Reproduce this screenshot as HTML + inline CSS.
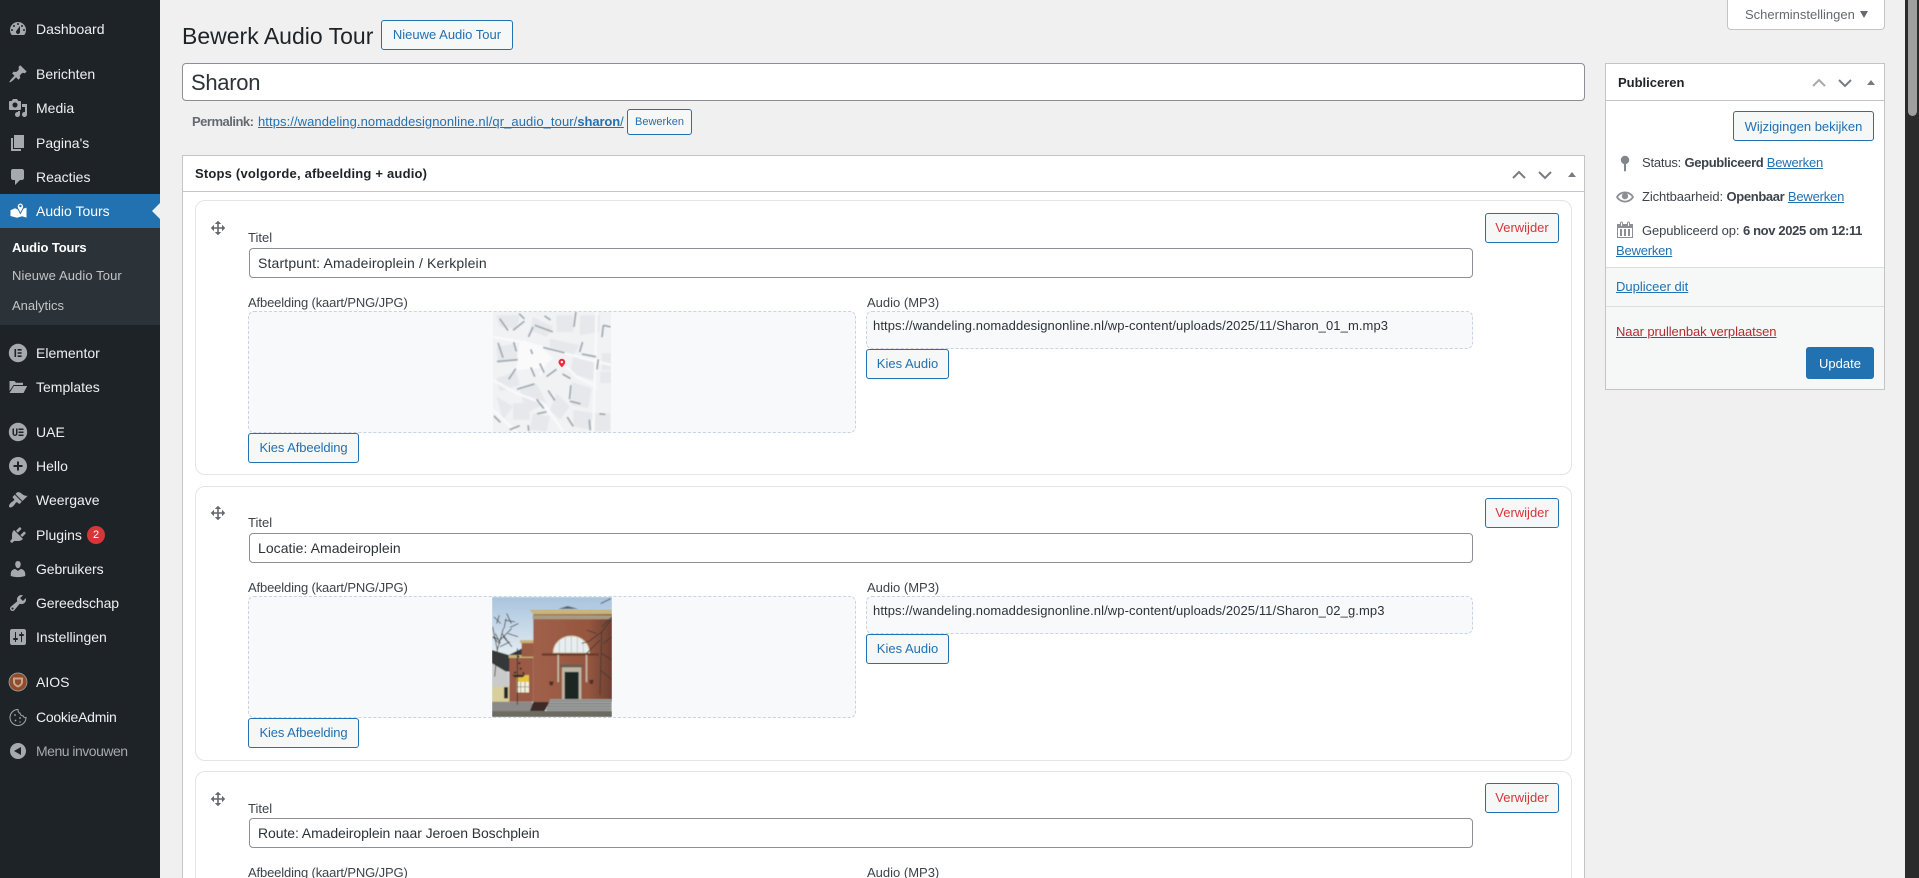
<!DOCTYPE html>
<html lang="nl"><head><meta charset="utf-8"><title>Bewerk Audio Tour</title>
<style>
html,body{margin:0;padding:0;width:1919px;height:878px;overflow:hidden;background:#f0f0f1;font-family:"Liberation Sans",Arial,sans-serif;font-size:13px;color:#3c434a}
*{box-sizing:border-box}
#wrap{position:absolute;left:0;top:0;width:1919px;height:878px;overflow:hidden;background:#f0f0f1}
.t,.b,.i,.a{position:absolute}
.t{white-space:nowrap;line-height:20px;height:20px}
.a{display:block}
#side{position:absolute;left:0;top:0;width:160px;height:878px;background:#1d2327}
#side .t{left:36px;color:#f0f0f1;font-size:14px}
#side svg{position:absolute;left:8px;width:20px;height:20px;fill:#a7aaad}
#side .s{left:12px;font-size:13px;color:#c3c4c7}
.b{border:1px solid #2271b1;background:#f6f7f7;color:#2271b1;border-radius:3px;text-align:center;white-space:nowrap;font-size:13px}
.in{position:absolute;background:#fff;border:1px solid #8c8f94;border-radius:4px;white-space:nowrap;color:#2c3338}
.ti{font-size:14px;letter-spacing:.05px;left:249px;width:1224px;height:30px;padding-left:8px;line-height:29px}
.card{position:absolute;left:195px;width:1377px;height:275px;background:#fff;border:1px solid #e2e4e7;border-radius:10px}
.dash{position:absolute;background:#f8f9fb;border:1px dashed #c9d3e3;border-radius:6px}
.lab{letter-spacing:-.14px}
.url{letter-spacing:.09px;color:#2c3338}
.pub b{letter-spacing:-.35px}
.pub{letter-spacing:-.1px}
.pub a{letter-spacing:-.2px}
.ka{letter-spacing:-.1px}
a{color:#2271b1;text-decoration:underline}
</style></head><body>
<div id="wrap">

<div id="side">
<div class="t" style="top:19px">Dashboard</div>
<svg style="top:19px" viewBox="0 0 20 20"><path fill-rule="evenodd" d="M3.76 16h12.48c1.1-1.37 1.76-3.11 1.76-5 0-4.42-3.58-8-8-8s-8 3.58-8 8c0 1.89.66 3.63 1.76 5zM10 4c.55 0 1 .45 1 1s-.45 1-1 1-1-.45-1-1 .45-1 1-1zM6 6c.55 0 1 .45 1 1s-.45 1-1 1-1-.45-1-1 .45-1 1-1zm8 0c.55 0 1 .45 1 1s-.45 1-1 1-1-.45-1-1 .45-1 1-1zm-5.37 5.55L12 7v6c0 1.1-.9 2-2 2s-2-.9-2-2c0-.57.24-1.08.63-1.45zM4 10c.55 0 1 .45 1 1s-.45 1-1 1-1-.45-1-1 .45-1 1-1zm12 0c.55 0 1 .45 1 1s-.45 1-1 1-1-.45-1-1 .45-1 1-1z"/></svg>
<div class="t" style="top:64px">Berichten</div>
<svg style="top:64px" viewBox="0 0 20 20"><path d="M10.44 3.02l1.82-1.82 6.36 6.35-1.83 1.82c-1.05-.68-2.48-.57-3.41.36l-.75.75c-.92.93-1.04 2.35-.35 3.41l-1.83 1.82-2.41-2.41-2.8 2.79c-.42.42-3.38 2.71-3.8 2.29s1.86-3.39 2.28-3.81l2.79-2.79L4.1 9.36l1.83-1.82c1.05.69 2.48.57 3.4-.36l.75-.75c.93-.92 1.05-2.35.36-3.41z"/></svg>
<div class="t" style="top:98px">Media</div>
<svg style="top:98px" viewBox="0 0 20 20"><path fill-rule="evenodd" d="M13 11V4c0-.55-.45-1-1-1h-1.67L9 1H5L3.67 3H2c-.55 0-1 .45-1 1v7c0 .55.45 1 1 1h10c.55 0 1-.45 1-1zM7 4.5c1.38 0 2.5 1.12 2.5 2.5S8.38 9.5 7 9.5 4.5 8.38 4.5 7 5.62 4.5 7 4.5zM14 6h5v10.5c0 1.38-1.12 2.5-2.5 2.5S14 17.88 14 16.5s1.12-2.5 2.5-2.5c.17 0 .34.02.5.05V9h-3V6zm-4 8.05V13h2v3.5c0 1.38-1.12 2.5-2.5 2.5S7 17.88 7 16.5 8.12 14 9.5 14c.17 0 .34.02.5.05z"/></svg>
<div class="t" style="top:133px">Pagina's</div>
<svg style="top:133px" viewBox="0 0 20 20"><path d="M6 15V2h10v13H6zm-1 1h8v2H3V5h2v11z"/></svg>
<div class="t" style="top:167px">Reacties</div>
<svg style="top:167px" viewBox="0 0 20 20"><path d="M5 2h9c1.1 0 2 .9 2 2v7c0 1.1-.9 2-2 2h-2l-5 5v-5H5c-1.1 0-2-.9-2-2V4c0-1.1.9-2 2-2z"/></svg>

<div style="position:absolute;left:0;top:194px;width:160px;height:34px;background:#2271b1"></div>
<div class="t" style="top:201px;color:#fff">Audio Tours</div>
<svg style="top:201px;fill:#fff" viewBox="0 0 20 20"><path d="M2.500 9.300l4.500-2 3 1.300 4.500-.6 4-1.400v10l-4.500-1.400-5 1.500-6.500-1.700z"/><path d="M12.400 12.500l-2.900-5.500c-1-2.300.8-5 2.900-5s3.900 2.700 2.900 5z" fill="#fff" stroke="#2271b1" stroke-width=".9"/><circle cx="12.400" cy="5" r="1.200" fill="#2271b1"/></svg>
<div style="position:absolute;left:152px;top:203px;border:8px solid transparent;border-left:0;border-right-color:#f0f0f1"></div>
<div style="position:absolute;left:0;top:228px;width:160px;height:97px;background:#2c3338"></div>
<div class="t s" style="top:238px;color:#fff;font-weight:bold;letter-spacing:-.1px">Audio Tours</div>
<div class="t s" style="top:266px;letter-spacing:.1px">Nieuwe Audio Tour</div>
<div class="t s" style="top:296px">Analytics</div>

<div class="t" style="top:343px">Elementor</div>
<svg style="top:343px" viewBox="0 0 20 20"><path fill-rule="evenodd" d="M10 .8a9.2 9.2 0 100 18.4A9.2 9.2 0 0010 .8zM6.500 6h1.600v8H6.500zM9.600 6h4v1.600h-4zm0 3.200h4v1.600h-4zm0 3.200h4V14h-4z"/></svg>
<div class="t" style="top:377px">Templates</div>
<svg style="top:377px" viewBox="0 0 20 20"><path d="M1.500 4h5l1.500 1.800h7V8H5.500L1.500 14zM5.800 9H19.200l-3.700 7H1.500z"/></svg>
<div class="t" style="top:422px">UAE</div>
<svg style="top:422px" viewBox="0 0 20 20"><path fill-rule="evenodd" d="M10 .8a9.200 9.200 0 100 18.400A9.200 9.200 0 0010 .800zM4.500 6.500h1.500v4.700c0 1 .5 1.400 1 1.400s1-.4 1-1.400V6.500h1.500v4.800c0 1.800-1 2.700-2.500 2.700s-2.500-.9-2.500-2.700zM10.500 6.500h5v1.500h-5zm0 3h5V11h-5zm0 3h5V14h-5z"/></svg>
<div class="t" style="top:456px">Hello</div>
<svg style="top:456px" viewBox="0 0 20 20"><path fill-rule="evenodd" d="M10 1c-5 0-9 4-9 9s4 9 9 9 9-4 9-9-4-9-9-9zm1 4.500v3.500h3.500v2H11v3.500H9V11H5.500V9H9V5.500h2z"/></svg>
<div class="t" style="top:490px">Weergave</div>
<svg style="top:490px" viewBox="0 0 20 20"><path d="M14.480 11.060L7.410 3.990l1.500-1.500c.5-.56 2.300-.47 3.510.32 1.210.8 1.430 1.280 2.910 2.100 1.180.64 2.450 1.260 4.450.85zm-.71.71L6.700 4.700 4.930 6.470c-.39.39-.39 1.020 0 1.410l1.060 1.060c.39.39.39 1.030 0 1.420-.6.6-1.430 1.110-2.210 1.690-.35.26-.7.53-1.010.84C1.430 14.230.4 16.080 1.400 17.070c.99 1 2.840-.03 4.180-1.360.31-.31.58-.66.85-1.020.57-.78 1.080-1.610 1.690-2.210.39-.39 1.020-.39 1.410 0l1.060 1.060c.39.39 1.020.39 1.410 0z"/></svg>
<div class="t" style="top:525px">Plugins</div>
<svg style="top:525px" viewBox="0 0 20 20"><path d="M13.110 4.360L9.870 7.600 8 5.730l3.240-3.240c.35-.34 1.050-.2 1.560.32.52.51.66 1.210.31 1.550zm-8 1.770l.91-1.120 9.010 9.010-1.190.84c-.71.71-2.630 1.160-3.820 1.160H6.140L4.900 17.260c-.59.59-1.540.59-2.120 0-.59-.58-.59-1.530 0-2.120l1.240-1.240v-3.880c0-1.130.4-3.190 1.090-3.890zm7.260 3.970l3.240-3.240c.34-.35 1.040-.21 1.550.31.52.51.66 1.210.31 1.550l-3.240 3.250z"/></svg>
<div style="position:absolute;left:87px;top:526px;width:18px;height:18px;border-radius:9px;background:#d63638;color:#fff;font-size:11px;line-height:18px;text-align:center">2</div>
<div class="t" style="top:559px;letter-spacing:-.1px">Gebruikers</div>
<svg style="top:559px" viewBox="0 0 20 20"><path d="M10 9.250c-2.270 0-2.730-3.440-2.730-3.440C7 4.020 7.820 2 9.970 2c2.160 0 2.980 2.020 2.710 3.810 0 0-.41 3.440-2.680 3.440zm0 2.570L12.720 10c2.390 0 4.520 2.330 4.520 4.530v2.490s-3.650 1.130-7.240 1.130c-3.650 0-7.240-1.130-7.240-1.130v-2.490c0-2.250 1.940-4.480 4.470-4.480z"/></svg>
<div class="t" style="top:593px;letter-spacing:-.1px">Gereedschap</div>
<svg style="top:593px" viewBox="0 0 20 20"><path fill-rule="evenodd" d="M16.680 9.770c-1.340 1.340-3.300 1.670-4.950.99l-5.410 6.520c-.99.99-2.590.99-3.580 0s-.99-2.590 0-3.570l6.520-5.420c-.68-1.650-.35-3.610.99-4.950 1.280-1.280 3.120-1.620 4.720-1.060l-2.890 2.890 2.820 2.820 2.860-2.870c.53 1.580.18 3.390-1.080 4.650zM3.810 16.210c.4.39 1.040.39 1.430 0 .4-.4.4-1.040 0-1.430-.39-.4-1.030-.4-1.430 0-.39.39-.39 1.030 0 1.430z"/></svg>
<div class="t" style="top:627px">Instellingen</div>
<svg style="top:627px" viewBox="0 0 20 20"><path fill-rule="evenodd" d="M18 16V4c0-1.100-.9-2-2-2H4c-1.100 0-2 .9-2 2v12c0 1.100.9 2 2 2h12c1.100 0 2-.9 2-2zM8 11h1c.55 0 1 .45 1 1s-.45 1-1 1H8v1.500c0 .28-.22.5-.5.5s-.5-.22-.5-.5V13H6c-.55 0-1-.45-1-1s.45-1 1-1h1V5.500c0-.28.22-.5.5-.5s.5.22.5.5V11zm5-2h-1c-.55 0-1-.45-1-1s.45-1 1-1h1V5.500c0-.28.22-.5.5-.5s.5.22.5.5V7h1c.55 0 1 .45 1 1s-.45 1-1 1h-1v5.500c0 .28-.22.5-.5.5s-.5-.22-.5-.5V9z"/></svg>
<div class="t" style="top:672px">AIOS</div>
<svg style="top:672px" viewBox="0 0 20 20"><circle cx="10" cy="10" r="9.200" fill="#8f4d2c"/><circle cx="10" cy="10" r="9" fill="none" stroke="#a7aaad" stroke-width=".7"/><path d="M5 5.500h10v4.500c0 2.500-2.500 4.500-5 5.500-2.500-1-5-3-5-5.500z" fill="#c9a58f"/><path d="M7 7.500h6v2.500c0 1.500-1.500 2.800-3 3.400-1.500-.6-3-1.900-3-3.400z" fill="#8f4d2c"/></svg>
<div class="t" style="top:707px;letter-spacing:-.25px">CookieAdmin</div>
<svg style="top:707px" viewBox="0 0 20 20"><path d="M10 2.500c-4.400 0-8 3.600-8 8s3.600 8 8 8 8-3.600 8-8c-1.500.3-2.800-.4-3-1.800-1.600.2-2.900-.9-2.800-2.500-1.400 0-2.400-2-2.200-3.700z" fill="none" stroke="#a7aaad" stroke-width="1"/><circle cx="7" cy="8" r=".9"/><circle cx="12" cy="11" r=".9"/><circle cx="7.500" cy="13.500" r=".9"/><circle cx="12" cy="15" r=".7"/></svg>
<div class="t" style="top:741px;color:#a7aaad;letter-spacing:-.5px">Menu invouwen</div>
<svg style="top:741px" viewBox="0 0 20 20"><path fill-rule="evenodd" d="M18 10c0-4.420-3.580-8-8-8s-8 3.580-8 8 3.580 8 8 8 8-3.580 8-8zm-5 4l-7-4 7-4v8z"/></svg>
</div>

<!-- Scrollbar -->
<div style="position:absolute;left:1905px;top:0;width:14px;height:878px;background:#2b2b2b"></div>
<div style="position:absolute;left:1908px;top:0;width:9px;height:116px;background:#9f9f9f;border-radius:0 0 5px 5px"></div>

<!-- Header -->
<div class="t" style="left:182px;top:21px;height:30px;line-height:30px;font-size:23px;color:#1d2327">Bewerk Audio Tour</div>
<div class="b" style="left:381px;top:20px;width:132px;height:30px;line-height:28px">Nieuwe Audio Tour</div>
<div style="position:absolute;left:1727px;top:0;width:158px;height:30px;background:#fff;border:1px solid #c3c4c7;border-top:0;border-radius:0 0 4px 4px"></div>
<div class="t" style="left:1745px;top:5px;color:#646970">Scherminstellingen</div>
<div style="position:absolute;left:1860px;top:11px;border-style:solid;border-color:#646970 transparent transparent;border-width:7px 4px 0"></div>

<div class="in" style="left:182px;top:63px;width:1403px;height:38px;padding-left:8px;font-size:22px;line-height:38px;letter-spacing:-.3px;color:#2c3338">Sharon</div>
<div class="t" style="left:192px;top:112px;color:#646970;font-weight:bold;letter-spacing:-.5px">Permalink:</div>
<div class="t" style="left:258px;top:112px;letter-spacing:.08px"><a>https://wandeling.nomaddesignonline.nl/qr_audio_tour/<b style="letter-spacing:-.1px">sharon</b>/</a></div>
<div class="b" style="left:627px;top:109px;width:65px;height:26px;line-height:24px;font-size:11px">Bewerken</div>

<!-- Stops box -->
<div style="position:absolute;left:182px;top:155px;width:1403px;height:723px;background:#fff;border:1px solid #c3c4c7;border-bottom:0"></div>
<div style="position:absolute;left:183px;top:191px;width:1401px;height:1px;background:#c3c4c7"></div>
<div class="t" style="left:195px;top:164px;font-weight:bold;color:#1d2327;letter-spacing:.2px">Stops (volgorde, afbeelding + audio)</div>
<svg class="i" style="left:1510px;top:166px" width="70" height="16" viewBox="0 0 70 16"><path d="M3 12l6-6 6 6M29 6l6 6 6-6" fill="none" stroke="#787c82" stroke-width="2"/><path d="M58 11l4-5 4 5z" fill="#787c82"/></svg>

<!-- Card 1 -->
<div class="card" style="top:200px"></div>
<svg class="i" style="left:210px;top:220px" width="16" height="16" viewBox="0 0 20 20" fill="#646970"><path d="M19 10l-4 4v-3h-4v4h3l-4 4-4-4h3v-4H5v3l-4-4 4-4v3h4V5H6l4-4 4 4h-3v4h4V6z"/></svg>
<div class="t" style="left:248px;top:228px">Titel</div>
<div class="in ti" style="top:248px;letter-spacing:.15px">Startpunt: Amadeiroplein / Kerkplein</div>
<div class="b" style="left:1485px;top:213px;width:74px;height:30px;line-height:28px;color:#d63638">Verwijder</div>
<div class="t lab" style="left:248px;top:293px">Afbeelding (kaart/PNG/JPG)</div>
<div class="dash" style="left:248px;top:311px;width:608px;height:122px"></div>
<svg class="i" style="left:493px;top:312px;width:118px;height:120px" viewBox="10 5 353 362" preserveAspectRatio="none">
<defs><filter id="bl" x="0" y="0" width="100%" height="100%"><feGaussianBlur stdDeviation="2.500"/></filter><filter id="bs" x="0" y="0" width="100%" height="100%"><feGaussianBlur stdDeviation="1.500"/></filter><clipPath id="mc"><rect x="10" y="5" width="353" height="362"/></clipPath></defs>
<g clip-path="url(#mc)"><rect x="10" y="5" width="353" height="362" fill="#f1f2f4"/>
<g filter="url(#bl)">
<path d="M20 15h70l-10 40-50-5zM130 20l60 30-20 30-50-20zM200 15h50v50h-50zM270 15h60v50l-60 10zM20 110l55-10 10 50-60 10zM90 100l30 20-20 40zM180 85l90 20-20 30-70-15zM250 140l70 10-10 60-70-20zM335 130h28v50h-28zM330 185h33v35h-33zM20 205l60-20 10 40-60 20zM90 240l50-20 30 60-60 30zM20 260l50 30-30 40zM70 280h50v50H70zM130 310l50 10-10 45-50-5zM200 250l40 40-30 40-30-30zM245 215l60 20-10 60-50-10zM250 300l60 10-10 50-50-10zM310 310h50v55h-50z" fill="#e6e8eb"/>
<path d="M90 90l70 25 30 30-40 30-70 5z" fill="#fafafb"/>
<path d="M10 80l110 20 70 20 90 25 83 20M320 5l-10 362M100 90l55 55M180 135l-30 60M10 210l70 40 80 30 60 85M230 170l30 30 60 30M10 300l70 67" stroke="#fafafb" stroke-width="7" fill="none"/>
</g>
<g filter="url(#bs)" stroke="#a0abb2" stroke-width="5" fill="none">
<path d="M30 25l25 36M88 10l16 16M70 60l34-27M135 45l54 20M130 50l-14 30M164 17l18 12M258 5l-6 45M340 45l-4 36M340 45l22 5M25 98l15 45M72 96l8 28M123 118l5 14M160 112l64 16M278 96l-9 30M276 132l42 8M325 148l-4 30M22 154l62-5M150 160l13 28M123 172l12 28M78 176l-21 32M170 200l30-22M218 192l24 14M82 238l52-16M243 226l-4 42M175 242l20 30M140 268l22 28M142 312l28-6M240 274l32 8M12 318l20 20M60 360l30-12M232 322l18 28M298 330l3 32M115 346l2 18M328 312l18 2"/>
</g>
<path d="M216 172c-7-7-10-11-10-16a10 10 0 0120 0c0 5-3 9-10 16z" fill="#ee2c40"/><circle cx="216" cy="156" r="3.500" fill="#fff"/></g>
</svg>
<div class="b ka" style="left:248px;top:433px;width:111px;height:30px;line-height:28px">Kies Afbeelding</div>
<div class="t" style="left:867px;top:293px">Audio (MP3)</div>
<div class="dash" style="left:866px;top:311px;width:607px;height:38px"></div>
<div class="t url" style="left:873px;top:316px">https://wandeling.nomaddesignonline.nl/wp-content/uploads/2025/11/Sharon_01_m.mp3</div>
<div class="b" style="left:866px;top:349px;width:83px;height:30px;line-height:28px">Kies Audio</div>

<!-- Card 2 -->
<div class="card" style="top:486px"></div>
<svg class="i" style="left:210px;top:505px" width="16" height="16" viewBox="0 0 20 20" fill="#646970"><path d="M19 10l-4 4v-3h-4v4h3l-4 4-4-4h3v-4H5v3l-4-4 4-4v3h4V5H6l4-4 4 4h-3v4h4V6z"/></svg>
<div class="t" style="left:248px;top:513px">Titel</div>
<div class="in ti" style="top:533px">Locatie: Amadeiroplein</div>
<div class="b" style="left:1485px;top:498px;width:74px;height:30px;line-height:28px;color:#d63638">Verwijder</div>
<div class="t lab" style="left:248px;top:578px">Afbeelding (kaart/PNG/JPG)</div>
<div class="dash" style="left:248px;top:596px;width:608px;height:122px"></div>
<svg class="i" style="left:492px;top:597px;width:120px;height:120px" viewBox="36 20 360 362" preserveAspectRatio="none">
<defs><linearGradient id="sky" x1="0" y1="0" x2="0" y2="1"><stop offset="0" stop-color="#a9c4de"/><stop offset=".45" stop-color="#dfe9f0"/><stop offset="1" stop-color="#eef2f2"/></linearGradient><linearGradient id="wall" x1="0" y1="0" x2="1" y2="0"><stop offset="0" stop-color="#a0604a"/><stop offset=".7" stop-color="#96563f"/><stop offset="1" stop-color="#6d4032"/></linearGradient><filter id="bp" x="0" y="0" width="100%" height="100%"><feGaussianBlur stdDeviation="1.300"/></filter></defs>
<g filter="url(#bp)"><rect x="36" y="20" width="360" height="362" fill="url(#sky)"/>
<path d="M36 180l50 15 40-20v70H36z" fill="#36393a"/>
<path d="M36 220l50 30v60H36z" fill="#c9cbcb"/><path d="M36 290h52v48H36z" fill="#d9cf9b"/><rect x="72" y="292" width="12" height="34" fill="#2a2a2a"/>
<path d="M88 200h72v136H88z" fill="#9a5a45"/><rect x="86" y="195" width="74" height="9" fill="#c8b27a"/>
<path d="M125 155h38v45h-38z" fill="#9b5b45"/><rect x="120" y="150" width="45" height="9" fill="#c7b078"/>
<path d="M160 68h236v268H160z" fill="url(#wall)"/>
<path d="M148 58h248v14H160z" fill="#c9b47a"/><path d="M158 75h238v12H158z" fill="#a79c84"/>
<path d="M235 56l28-9 32 9z" fill="#5a6469"/>
<path d="M220 188a54 50 0 01108 0z" fill="#e8eef0" stroke="#d8cdb0" stroke-width="3"/><path d="M238 188v-34M256 188v-46M274 188v-50M292 188v-46M310 188v-34" stroke="#9fa7a5" stroke-width="1.500"/>
<rect x="186" y="190" width="170" height="7" fill="#6c3b2c"/>
<rect x="246" y="230" width="58" height="98" fill="#bdb6a4"/><rect x="240" y="224" width="70" height="8" fill="#675c52"/><rect x="254" y="246" width="42" height="82" fill="#1e2724"/>
<rect x="232" y="195" width="5" height="82" fill="#c2b8a8"/><rect x="317" y="195" width="5" height="82" fill="#c2b8a8"/>
<path d="M207 275h14l-3 12h-8zM327 270h14l-3 12h-8z" fill="#4b3027"/>
<rect x="110" y="256" width="37" height="52" fill="#f2f0d8"/><rect x="110" y="256" width="37" height="20" fill="#e6c23c"/><path d="M122 276v32M135 276v32M110 291h37" stroke="#555" stroke-width="1.500"/>
<path d="M36 336h120l10 28H36z" fill="#8b8a88"/>
<path d="M160 336h50l-16 28h-44z" fill="#3c2c28"/>
<path d="M210 328h185v36H198z" fill="#9fa1a0"/><path d="M208 334h187M204 342h191M200 350h195M197 358h198" stroke="#6f7170" stroke-width="2"/>
<rect x="36" y="364" width="360" height="18" fill="#6d6a62"/>
<g stroke="#3e3834" fill="none" stroke-width="2.500"><path d="M44 260l8-80M52 180l-14-70M52 180l18-65M60 150l35-35M46 130l15 30M66 130l18 25M40 210l12-10M60 170l30-15M72 115l6-30M50 100l8-25M90 112l25-12M75 90l30 5M38 140l20 20M62 100l-20-20M84 130l30 10M80 70l14 30M58 150l-18-10M70 140l26 30"/><path d="M400 80l-35 45-40 30-20 5M365 125l-5 190M365 110l30-30M360 150l-40 40M365 190l30 20M362 40l30-15M360 240l36 30M350 130l-30-10M370 160l26-20" stroke-width="2.500"/></g>
<path d="M112 175v170" stroke="#2c2c2e" stroke-width="2.500"/><path d="M96 255h40l-8 7h-24z" fill="#2c2c2e"/>
<circle cx="115" cy="200" r="3" fill="#222"/><circle cx="118" cy="220" r="3" fill="#222"/><circle cx="122" cy="236" r="3" fill="#222"/><circle cx="105" cy="248" r="3" fill="#222"/><circle cx="130" cy="250" r="3" fill="#222"/></g>
</svg>
<div class="b ka" style="left:248px;top:718px;width:111px;height:30px;line-height:28px">Kies Afbeelding</div>
<div class="t" style="left:867px;top:578px">Audio (MP3)</div>
<div class="dash" style="left:866px;top:596px;width:607px;height:38px"></div>
<div class="t url" style="left:873px;top:601px">https://wandeling.nomaddesignonline.nl/wp-content/uploads/2025/11/Sharon_02_g.mp3</div>
<div class="b" style="left:866px;top:634px;width:83px;height:30px;line-height:28px">Kies Audio</div>

<!-- Card 3 -->
<div class="card" style="top:771px;height:107px;border-bottom:0;border-radius:10px 10px 0 0"></div>
<svg class="i" style="left:210px;top:791px" width="16" height="16" viewBox="0 0 20 20" fill="#646970"><path d="M19 10l-4 4v-3h-4v4h3l-4 4-4-4h3v-4H5v3l-4-4 4-4v3h4V5H6l4-4 4 4h-3v4h4V6z"/></svg>
<div class="t" style="left:248px;top:799px">Titel</div>
<div class="in ti" style="top:818px;letter-spacing:-.08px">Route: Amadeiroplein naar Jeroen Boschplein</div>
<div class="b" style="left:1485px;top:783px;width:74px;height:30px;line-height:28px;color:#d63638">Verwijder</div>
<div class="t lab" style="left:248px;top:865px;height:13px;line-height:15px">Afbeelding (kaart/PNG/JPG)</div>
<div class="t" style="left:867px;top:865px;height:13px;line-height:15px">Audio (MP3)</div>

<!-- Publish box -->
<div style="position:absolute;left:1605px;top:63px;width:280px;height:327px;background:#fff;border:1px solid #c3c4c7"></div>
<div style="position:absolute;left:1606px;top:100px;width:278px;height:1px;background:#c3c4c7"></div>
<div class="t" style="left:1618px;top:73px;font-weight:bold;color:#1d2327">Publiceren</div>
<svg class="i" style="left:1810px;top:74px" width="70" height="16" viewBox="0 0 70 16"><path d="M3 12l6-6 6 6" fill="none" stroke="#a7aaad" stroke-width="2"/><path d="M29 6l6 6 6-6" fill="none" stroke="#787c82" stroke-width="2"/><path d="M57 11l4-5 4 5z" fill="#787c82"/></svg>
<div class="b" style="left:1733px;top:111px;width:141px;height:30px;line-height:29px">Wijzigingen bekijken</div>
<svg class="i" style="left:1616px;top:154px" width="20" height="20" viewBox="0 0 20 20" fill="#82878c"><circle cx="9" cy="6" r="4.200"/><path d="M8 8h2v9l-1 .5-1-.5z"/></svg>
<div class="t pub" style="left:1642px;top:153px;letter-spacing:-.2px">Status: <b>Gepubliceerd</b> <a>Bewerken</a></div>
<svg class="i" style="left:1616px;top:188px" width="18" height="18" viewBox="0 0 20 20" fill="#8c8f94"><path fill-rule="evenodd" d="M19.700 9.400C17.700 6 14 3.900 10 3.900S2.300 6 .3 9.400L0 10l.3.6c2 3.400 5.700 5.500 9.700 5.500s7.700-2.100 9.700-5.500l.3-.6-.3-.6zM10 14.100c-3.100 0-6-1.600-7.700-4.100C3.600 8 5.700 6.600 8 6.100c-.9.6-1.500 1.700-1.500 2.900 0 1.900 1.600 3.500 3.500 3.500s3.500-1.600 3.500-3.500c0-1.200-.6-2.300-1.500-2.900 2.300.5 4.400 1.900 5.700 3.900-1.700 2.500-4.600 4.100-7.700 4.100z"/></svg>
<div class="t pub" style="left:1642px;top:187px">Zichtbaarheid: <b>Openbaar</b> <a>Bewerken</a></div>
<svg class="i" style="left:1615px;top:220px" width="20" height="20" viewBox="0 0 20 20" fill="#8c8f94"><path fill-rule="evenodd" d="M15 4h3v14H2V4h3V3c0-.83.67-1.500 1.500-1.500S8 2.170 8 3v1h4V3c0-.83.67-1.500 1.500-1.500S15 2.170 15 3v1zM6 3v2.500c0 .28.22.5.5.5s.5-.22.5-.5V3c0-.28-.22-.5-.5-.5S6 2.720 6 3zm7 0v2.500c0 .28.22.5.5.5s.5-.22.5-.5V3c0-.28-.22-.5-.5-.5S13 2.720 13 3zm4 14V8H3v9h14zM5 9h2v7H5zm4 0h2v7H9zm4 0h2v7h-2z"/></svg>
<div class="t pub" style="left:1642px;top:221px">Gepubliceerd op: <b>6 nov 2025 om 12:11</b></div>
<div class="t pub" style="left:1616px;top:241px"><a>Bewerken</a></div>
<div style="position:absolute;left:1606px;top:267px;width:278px;height:122px;background:#f6f7f7;border-top:1px solid #dcdcde"></div>
<div class="t" style="left:1616px;top:277px"><a>Dupliceer dit</a></div>
<div style="position:absolute;left:1606px;top:306px;width:278px;height:1px;background:#dcdcde"></div>
<div class="t" style="left:1616px;top:322px;letter-spacing:-.08px"><a style="color:#b32d2e">Naar prullenbak verplaatsen</a></div>
<div class="b" style="left:1806px;top:347px;width:68px;height:32px;line-height:31px;background:#2271b1;color:#fff">Update</div>

</div>
</body></html>
